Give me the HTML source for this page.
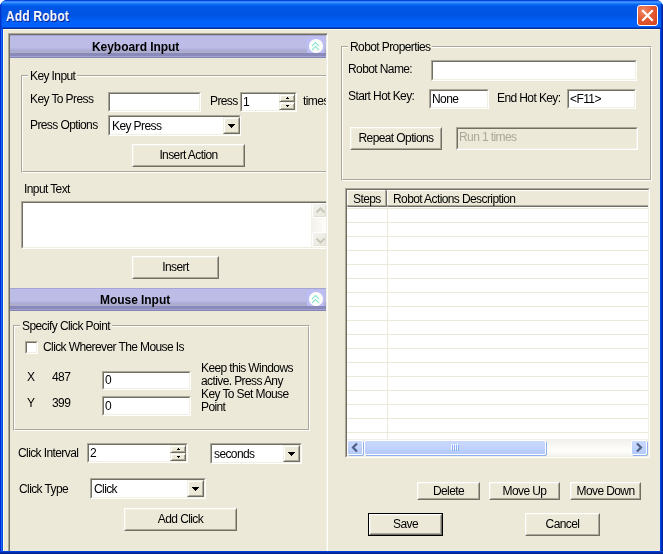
<!DOCTYPE html>
<html><head><meta charset="utf-8">
<style>
*{box-sizing:border-box;margin:0;padding:0}
html,body{width:663px;height:554px;overflow:hidden;background:#fff}
body{position:relative;font-family:"Liberation Sans",sans-serif;font-size:11px;color:#000}
.a{position:absolute}
.t,.gl,.btn span,.hc span{font-size:12px;letter-spacing:-0.6px;margin-top:1px}
.t,.gl,.btn span,.hc span,.ht,.ttl{will-change:transform}
.t{position:absolute;white-space:nowrap;line-height:13px}
#win{position:absolute;left:0;top:0;width:663px;height:554px;background:#0831D9;border-radius:7px 7px 0 0;overflow:hidden}
#title{position:absolute;left:0;top:0;width:663px;height:29px;background:linear-gradient(to bottom,#0843D8 0,#0843D8 1px,#2C82FF 1px,#2C82FF 2px,#3D93FF 2px,#3D93FF 3px,#1F7BFC 3px,#1F7BFC 4px,#0A68F4 4px,#0A68F4 5px,#0260EE 5px,#0260EE 6px,#0056E6 6px,#0054E3 16px,#005EF6 20px,#0062FB 23px,#0062FB 27px,#0046D2 27px,#0046D2 28px,#00309C 28px)}
#lb{position:absolute;left:0;top:29px;width:3px;height:525px;background:linear-gradient(to right,#0028D8 0,#0028D8 1px,#1A6CF0 1px,#1A6CF0 2px,#0048E0 2px)}
#rb{position:absolute;left:660px;top:29px;width:3px;height:525px;background:linear-gradient(to right,#0048E0 0,#0048E0 1px,#0030C8 1px,#0030C8 2px,#00209A 2px)}
#bb{position:absolute;left:0;top:551px;width:663px;height:3px;background:linear-gradient(to bottom,#0040D8 0,#0040D8 1px,#0030B0 1px,#0030B0 2px,#00208A 2px)}
#client{position:absolute;left:3px;top:29px;width:657px;height:522px;background:#ECE9D8;border-left:1px solid #FFF8E2;border-top:1px solid #FFF8E2}
.ttl{position:absolute;left:6px;top:8px;font-size:14px;font-weight:bold;color:#fff;letter-spacing:0.3px;text-shadow:1px 1px 0 #0A1E8C;line-height:16px;transform:scaleX(0.85);transform-origin:0 0;white-space:nowrap}
/* sunken field 2px */
.fld{position:absolute;background:#fff;border:1px solid;border-color:#ACA899 #fff #fff #ACA899}
.fld::before{content:"";position:absolute;left:0;top:0;right:0;bottom:0;border:1px solid;border-color:#716F64 #F1EFE2 #F1EFE2 #716F64}
.btn{position:absolute;background:#ECE9D8;border:1px solid;border-color:#fff #716F64 #716F64 #fff;text-align:center}
.btn::before{content:"";position:absolute;left:0;top:0;right:0;bottom:0;border:1px solid;border-color:#F1EFE2 #ACA899 #ACA899 #F1EFE2}
.btn span{position:absolute;left:0;right:0;white-space:nowrap;line-height:13px}
.grp{position:absolute;border:1px solid;border-color:#ACA899 #fff #fff #ACA899}
.grp::before{content:"";position:absolute;left:0;top:0;right:0;bottom:0;border:1px solid;border-color:#fff #ACA899 #ACA899 #fff}
.gl{position:absolute;background:#ECE9D8;padding:0 2px;white-space:nowrap;line-height:13px}
.hdr{position:absolute;left:10px;width:316px;height:23px;background:linear-gradient(to bottom,#A4A4D6 0,#A4A4D6 1px,#BCBCE6 1px,#BCBCE6 13px,#B6B6E0 13px,#B6B6E0 14px,#B0B0DA 14px,#B0B0DA 15px,#ABABD4 15px,#ABABD4 16px,#AEAECC 16px,#AEAECC 18px,#8A8ABA 18px,#8A8ABA 21px,#A2A2D2 21px,#A2A2D2 22px,#8686B6 22px)}
.ht{position:absolute;font-weight:bold;font-size:12px;line-height:13px;letter-spacing:-0.05px;white-space:nowrap;color:#000}
.cbtn{position:absolute;width:17px;height:16px;background:#BDBDF6}
.cbtn svg{position:absolute;left:0;top:0}
.spin{position:absolute;width:16px;height:16px}
.spin .up,.spin .dn{position:absolute;left:0;width:16px;height:8px;background:#ECE9D8;border:1px solid;border-color:#F1EFE2 #716F64 #716F64 #F1EFE2;box-shadow:inset 1px 1px 0 #fff,inset -1px -1px 0 #ACA899}
.spin .up{top:0}.spin .dn{top:8px}
.spin .up::after{content:"";position:absolute;left:6px;top:2px;width:3px;height:2px;background:linear-gradient(#000,#000) 1px 0/1px 1px no-repeat,linear-gradient(#000,#000) 0 1px/3px 1px no-repeat}
.spin .dn::after{content:"";position:absolute;left:6px;top:2px;width:3px;height:2px;background:linear-gradient(#000,#000) 0 0/3px 1px no-repeat,linear-gradient(#000,#000) 1px 1px/1px 1px no-repeat}
.dd{position:absolute;background:#ECE9D8;border:1px solid;border-color:#F1EFE2 #716F64 #716F64 #F1EFE2}
.dd::before{content:"";position:absolute;left:0;top:0;right:0;bottom:0;border:1px solid;border-color:#fff #ACA899 #ACA899 #fff}
.dd::after{content:"";position:absolute;left:4px;top:6px;width:7px;height:4px;background:linear-gradient(#000,#000) 0 0/7px 1px no-repeat,linear-gradient(#000,#000) 1px 1px/5px 1px no-repeat,linear-gradient(#000,#000) 2px 2px/3px 1px no-repeat,linear-gradient(#000,#000) 3px 3px/1px 1px no-repeat}
.vsb{position:absolute;background:linear-gradient(to right,#F3F1EA,#FEFEFB)}
.chk{position:absolute;width:13px;height:13px;background:#fff;border:1px solid;border-color:#ACA899 #fff #fff #ACA899}
.chk::before{content:"";position:absolute;left:0;top:0;right:0;bottom:0;border:1px solid;border-color:#716F64 #F1EFE2 #F1EFE2 #716F64}
.dis{background:#ECE9D8}
.dbtn{position:absolute;border:1px solid #000}
.hc{position:absolute;height:17px;background:#ECE9D8;border:1px solid;border-color:#fff #716F64 #716F64 #fff}
.hc::before{content:"";position:absolute;left:-1px;top:-1px;right:0;bottom:0;border-right:1px solid #ACA899;border-bottom:1px solid #ACA899}
.hc span{position:absolute;top:1px;white-space:nowrap;line-height:13px}
.sbb{position:absolute;border:1px solid #fff;border-radius:2px;background:linear-gradient(to bottom,#C9D8FD 0,#C2D3FC 50%,#B2C9F8 100%);box-shadow:1px 1px 0 #8EAEEC}
.sbd{position:absolute;border:1px solid #fff;border-radius:2px;background:linear-gradient(to bottom right,#F4F3EE,#E8E6DC);box-shadow:inset -1px -1px 0 #E2E0D4}
</style></head><body>
<div id="win">
 <div id="title"></div>
 <div class="a" style="left:0;top:4px;width:2px;height:25px;background:linear-gradient(to right,#0032CC 0,#0032CC 1px,#0447DC 1px)"></div>
 <div class="a" style="left:661px;top:4px;width:2px;height:25px;background:linear-gradient(to right,#0038C4 0,#0038C4 1px,#00249C 1px)"></div>
 <div id="lb"></div><div id="rb"></div><div id="bb"></div>
 <div class="ttl">Add Robot</div>
 <div class="a" style="left:637px;top:5px;width:21px;height:21px;border:1px solid #fff;border-radius:3px;background:radial-gradient(circle at 30% 25%,#F08A68 0,#E45A32 45%,#D2431C 100%)">
  <svg width="19" height="19" class="a" style="left:0;top:0"><path d="M5 5 L14 14 M14 5 L5 14" stroke="#fff" stroke-width="2.2" stroke-linecap="square"/></svg>
 </div>

 <div id="client"></div>
 <!-- LEFT PANEL -->
 <div class="a" style="left:8px;top:33px;width:320px;height:518px;border-top:1px solid #ACA899;border-left:1px solid #ACA899;border-right:1px solid #fff"></div>
 <div class="a" style="left:9px;top:34px;width:318px;height:517px;border-top:1px solid #716F64;border-left:1px solid #716F64;"></div>
 <div class="a" style="left:326px;top:35px;width:1px;height:516px;background:#F1EFE2"></div>
 <div id="lp" class="a" style="left:0;top:0;width:663px;height:554px;clip-path:inset(35px 337px 3px 10px)">
  <!-- keyboard header -->
  <div class="hdr" style="top:35px"></div>
  <div class="ht" style="left:92px;top:41px">Keyboard Input</div>
  <div class="cbtn" style="left:307px;top:37px"><svg width="17" height="16"><circle cx="9" cy="9" r="7.1" fill="#FDFDF8"/><path d="M5 9 L8.5 5.5 L12 9 M5 13 L8.5 9.5 L12 13" stroke="#90E6DC" stroke-width="1.1" fill="none"/></svg></div>
  <!-- key input group -->
  <div class="grp" style="left:21px;top:75px;width:330px;height:98px"></div>
  <div class="gl" style="left:28px;top:69px">Key Input</div>
  <div class="t" style="left:30px;top:92px">Key To Press</div>
  <div class="fld" style="left:108px;top:92px;width:93px;height:20px"></div>
  <div class="t" style="left:210px;top:94px">Press</div>
  <div class="fld" style="left:240px;top:92px;width:57px;height:20px"><div class="t" style="left:2px;top:2px">1</div></div>
  <div class="spin" style="left:279px;top:94px"><div class="up"></div><div class="dn"></div></div>
  <div class="t" style="left:303px;top:94px">times</div>
  <div class="t" style="left:30px;top:118px">Press Options</div>
  <div class="fld" style="left:108px;top:115px;width:133px;height:21px"><div class="t" style="left:3px;top:3px">Key Press</div></div>
  <div class="dd" style="left:223px;top:117px;width:17px;height:17px"></div>
  <div class="btn" style="left:132px;top:144px;width:113px;height:23px"><span style="top:3px">Insert Action</span></div>
  <div class="t" style="left:24px;top:182px">Input Text</div>
  <div class="fld" style="left:21px;top:201px;width:320px;height:48px"></div>
  <div class="vsb" style="left:311px;top:203px;width:16px;height:44px"></div>
  <div class="sbd" style="left:312px;top:203px;width:15px;height:15px"><svg width="15" height="15" class="a" style="left:0;top:0"><path d="M3.5 8.5 L7.5 4.5 L11.5 8.5" stroke="#C9C7BA" stroke-width="2" fill="none"/></svg></div>
  <div class="sbd" style="left:312px;top:232px;width:15px;height:15px"><svg width="15" height="15" class="a" style="left:0;top:0"><path d="M3.5 5.5 L7.5 9.5 L11.5 5.5" stroke="#C9C7BA" stroke-width="2" fill="none"/></svg></div>
  <div class="btn" style="left:132px;top:256px;width:87px;height:23px"><span style="top:3px">Insert</span></div>
  <!-- mouse header -->
  <div class="hdr" style="top:288px"></div>
  <div class="ht" style="left:100px;top:294px">Mouse Input</div>
  <div class="cbtn" style="left:307px;top:290px"><svg width="17" height="16"><circle cx="9" cy="9" r="7.1" fill="#FDFDF8"/><path d="M5 9 L8.5 5.5 L12 9 M5 13 L8.5 9.5 L12 13" stroke="#90E6DC" stroke-width="1.1" fill="none"/></svg></div>
  <div class="grp" style="left:13px;top:325px;width:297px;height:106px"></div>
  <div class="gl" style="left:20px;top:319px">Specify Click Point</div>
  <div class="chk" style="left:25px;top:341px"></div>
  <div class="t" style="left:43px;top:340px">Click Wherever The Mouse Is</div>
  <div class="t" style="left:27px;top:370px">X</div>
  <div class="t" style="left:52px;top:370px">487</div>
  <div class="t" style="left:27px;top:396px">Y</div>
  <div class="t" style="left:52px;top:396px">399</div>
  <div class="fld" style="left:102px;top:371px;width:89px;height:19px"><div class="t" style="left:2px;top:1px">0</div></div>
  <div class="fld" style="left:102px;top:396px;width:89px;height:20px"><div class="t" style="left:2px;top:2px">0</div></div>
  <div class="t" style="left:201px;top:361px;line-height:13px">Keep this Windows<br>active. Press Any<br>Key To Set Mouse<br>Point</div>
  <div class="t" style="left:18px;top:446px">Click Interval</div>
  <div class="fld" style="left:87px;top:443px;width:101px;height:20px"><div class="t" style="left:2px;top:2px">2</div></div>
  <div class="spin" style="left:170px;top:445px"><div class="up"></div><div class="dn"></div></div>
  <div class="fld" style="left:210px;top:443px;width:92px;height:21px"><div class="t" style="left:3px;top:3px">seconds</div></div>
  <div class="dd" style="left:283px;top:445px;width:17px;height:17px"></div>
  <div class="t" style="left:19px;top:482px">Click Type</div>
  <div class="fld" style="left:90px;top:478px;width:116px;height:21px"><div class="t" style="left:3px;top:3px">Click</div></div>
  <div class="dd" style="left:187px;top:480px;width:17px;height:17px"></div>
  <div class="btn" style="left:124px;top:508px;width:113px;height:23px"><span style="top:3px">Add Click</span></div>
 </div>
 <!-- RIGHT PANEL -->
 <div id="rp" class="a" style="left:0;top:0;width:663px;height:554px;">
  <div class="grp" style="left:341px;top:46px;width:311px;height:135px"></div>
  <div class="gl" style="left:348px;top:40px">Robot Properties</div>
  <div class="t" style="left:348px;top:62px">Robot Name:</div>
  <div class="fld" style="left:431px;top:60px;width:206px;height:21px"></div>
  <div class="t" style="left:348px;top:89px">Start Hot Key:</div>
  <div class="fld" style="left:429px;top:89px;width:60px;height:20px"><div class="t" style="left:2px;top:2px">None</div></div>
  <div class="t" style="left:497px;top:91px">End Hot Key:</div>
  <div class="fld" style="left:567px;top:89px;width:69px;height:20px"><div class="t" style="left:2px;top:2px">&lt;F11&gt;</div></div>
  <div class="btn" style="left:350px;top:127px;width:92px;height:23px"><span style="top:3px">Repeat Options</span></div>
  <div class="fld dis" style="left:456px;top:127px;width:182px;height:23px"><div class="t" style="left:2px;top:2px;color:#ACA899">Run 1 times</div></div>
  <!-- list -->
  <div class="fld" style="left:345px;top:188px;width:305px;height:270px;"></div>
  <div class="a" style="left:347px;top:190px;width:301px;height:266px;overflow:hidden;background:#fff">
   <div class="a" style="left:0;top:18px;width:301px;height:1px;background:#ECE9D8"></div><div class="a" style="left:0;top:32px;width:301px;height:1px;background:#ECE9D8"></div><div class="a" style="left:0;top:46px;width:301px;height:1px;background:#ECE9D8"></div><div class="a" style="left:0;top:60px;width:301px;height:1px;background:#ECE9D8"></div><div class="a" style="left:0;top:74px;width:301px;height:1px;background:#ECE9D8"></div><div class="a" style="left:0;top:88px;width:301px;height:1px;background:#ECE9D8"></div><div class="a" style="left:0;top:102px;width:301px;height:1px;background:#ECE9D8"></div><div class="a" style="left:0;top:116px;width:301px;height:1px;background:#ECE9D8"></div><div class="a" style="left:0;top:130px;width:301px;height:1px;background:#ECE9D8"></div><div class="a" style="left:0;top:144px;width:301px;height:1px;background:#ECE9D8"></div><div class="a" style="left:0;top:158px;width:301px;height:1px;background:#ECE9D8"></div><div class="a" style="left:0;top:172px;width:301px;height:1px;background:#ECE9D8"></div><div class="a" style="left:0;top:186px;width:301px;height:1px;background:#ECE9D8"></div><div class="a" style="left:0;top:200px;width:301px;height:1px;background:#ECE9D8"></div><div class="a" style="left:0;top:214px;width:301px;height:1px;background:#ECE9D8"></div><div class="a" style="left:0;top:228px;width:301px;height:1px;background:#ECE9D8"></div><div class="a" style="left:0;top:242px;width:301px;height:1px;background:#ECE9D8"></div>
   <div class="a" style="left:40px;top:17px;width:1px;height:249px;background:#ECE9D8"></div>
   <div class="hc" style="left:0;top:0;width:40px"><span style="left:5px">Steps</span></div>
   <div class="hc" style="left:40px;top:0;width:270px"><span style="left:5px">Robot Actions Description</span></div>
   <div class="a" style="left:0;top:249px;width:301px;height:17px;background:linear-gradient(to bottom,#EEEDE5 0,#F3F1EC 1px,#FEFEFB 70%,#F4F2EC)"></div>
   <div class="sbb" style="left:0;top:250px;width:16px;height:15px"><svg width="16" height="15" class="a" style="left:-1px;top:-1px"><path d="M10 3.5 L6 7.5 L10 11.5" stroke="#4D6185" stroke-width="2.2" fill="none"/></svg></div>
   <div class="sbb" style="left:17px;top:250px;width:182px;height:15px"><div class="a" style="left:86px;top:3px;width:7px;height:6px;background:repeating-linear-gradient(to right,#F6F9FF 0,#F6F9FF 1px,transparent 1px,transparent 2px)"></div><div class="a" style="left:87px;top:4px;width:7px;height:6px;background:repeating-linear-gradient(to right,#8AAEF6 0,#8AAEF6 1px,transparent 1px,transparent 2px)"></div></div>
   <div class="sbb" style="left:284px;top:250px;width:16px;height:15px"><svg width="16" height="15" class="a" style="left:-1px;top:-1px"><path d="M6 3.5 L10 7.5 L6 11.5" stroke="#4D6185" stroke-width="2.2" fill="none"/></svg></div>
  </div>
  <div class="btn" style="left:417px;top:482px;width:63px;height:18px"><span style="top:1px">Delete</span></div>
  <div class="btn" style="left:489px;top:482px;width:71px;height:18px"><span style="top:1px">Move Up</span></div>
  <div class="btn" style="left:570px;top:482px;width:71px;height:18px"><span style="top:1px">Move Down</span></div>
  <div class="dbtn" style="left:368px;top:513px;width:75px;height:23px"><div class="btn" style="left:0;top:0;width:73px;height:21px"><span style="top:2px">Save</span></div></div>
  <div class="btn" style="left:525px;top:513px;width:75px;height:23px"><span style="top:3px">Cancel</span></div>
 </div>
</div>
</body></html>
